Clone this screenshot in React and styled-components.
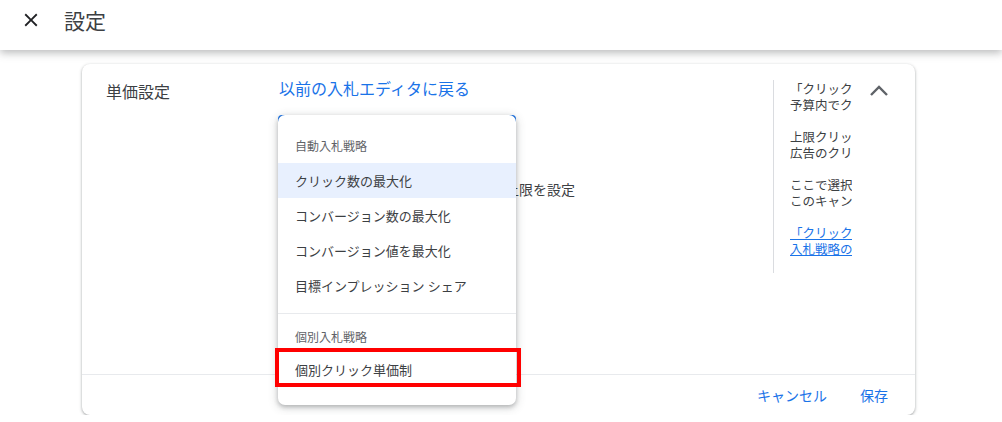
import React from 'react'
import styled, { createGlobalStyle } from 'styled-components'

const GlobalStyle = createGlobalStyle`
  body {
    margin: 0;
    background: #ffffff;
    font-family: Roboto, "Noto Sans CJK JP", sans-serif;
    color: #3c4043;
  }
`

const helpText = [
  ['「クリック数の最大化」は、', '予算内でクリック数が最大になるように'],
  ['上限クリック単価を設定すると、', '広告のクリック単価が制限されます'],
  ['ここで選択した入札戦略は、', 'このキャンペーンにのみ適用されます'],
]

const autoStrategies = [
  'クリック数の最大化',
  'コンバージョン数の最大化',
  'コンバージョン値を最大化',
  '目標インプレッション シェア',
]

export default function App() {
  return (
    <>
      <GlobalStyle />
      <Header>
        <CloseIcon viewBox="0 0 24 24">
          <path d="M19 6.41L17.59 5 12 10.59 6.41 5 5 6.41 10.59 12 5 17.59 6.41 19 12 13.41 17.59 19 19 17.59 13.41 12z" />
        </CloseIcon>
        <Title>設定</Title>
      </Header>
      <Main>
        <Card>
          <CardBody>
            <Label>単価設定</Label>
            <Content>
              <Link>以前の入札エディタに戻る</Link>
              <SelectBox />
              <OptionRow>
                <Checkbox />
                <span>自動入札で最大クリック単価の上限を設定</span>
              </OptionRow>
              <Dropdown>
                <GroupTitle>自動入札戦略</GroupTitle>
                {autoStrategies.map((s, i) => (
                  <Item key={s} $active={i === 0}>{s}</Item>
                ))}
                <Divider />
                <GroupTitle $small>個別入札戦略</GroupTitle>
                <Item $marked>個別クリック単価制</Item>
              </Dropdown>
            </Content>
            <Side>
              <HelpText>
                {helpText.map((p, i) => (
                  <Para key={i}>
                    {p.map((l) => (
                      <Line key={l}>{l}</Line>
                    ))}
                  </Para>
                ))}
                <Para>
                  <HelpLink>「クリック数の最大化」</HelpLink>
                  <HelpLink>入札戦略の詳細</HelpLink>
                </Para>
              </HelpText>
              <Chevron viewBox="0 0 24 24">
                <path d="M4 15l8-8 8 8" />
              </Chevron>
            </Side>
          </CardBody>
          <Footer>
            <TextButton>キャンセル</TextButton>
            <TextButton>保存</TextButton>
          </Footer>
        </Card>
      </Main>
    </>
  )
}

const Header = styled.header`
  height: 50px;
  padding: 0 0 10px 20px;
  box-sizing: border-box;
  display: flex;
  align-items: center;
  gap: 22px;
  background: #fff;
  box-shadow: 0 3px 8px rgba(60, 64, 67, 0.35);
  position: relative;
  z-index: 2;
`

const CloseIcon = styled.svg`
  width: 22px;
  height: 22px;
  fill: #202124;
`

const Title = styled.h1`
  margin: 0;
  font-size: 21px;
  font-weight: 400;
  color: #3c4043;
`

const Main = styled.main`
  padding: 14px 0 0 82px;
`

const Card = styled.section`
  width: 833px;
  background: #fff;
  border-radius: 8px;
  box-shadow: 0 1px 2px rgba(60, 64, 67, 0.3), 0 1px 3px 1px rgba(60, 64, 67, 0.15);
`

const CardBody = styled.div`
  height: 310px;
  box-sizing: border-box;
  padding: 16px 24px 0 24px;
  display: grid;
  grid-template-columns: 173px 1fr auto;
  align-items: start;
`

const Label = styled.div`
  font-size: 16px;
  line-height: 24px;
  color: #3c4043;
  padding-top: 1px;
`

const Content = styled.div`
  position: relative;
  display: flex;
  flex-direction: column;
  align-items: flex-start;
`

const Link = styled.a`
  font-size: 16px;
  line-height: 20px;
  color: #1a73e8;
  cursor: pointer;
`

const SelectBox = styled.div`
  margin: 15px 0 0 -1px;
  width: 234px;
  height: 40px;
  border: 2px solid #1a73e8;
  border-radius: 4px;
`

const OptionRow = styled.div`
  margin-top: 21px;
  display: flex;
  align-items: center;
  gap: 12px;
  font-size: 14px;
  line-height: 20px;
  color: #3c4043;
`

const Checkbox = styled.span`
  width: 14px;
  height: 14px;
  border: 2px solid #5f6368;
  border-radius: 2px;
`

const Dropdown = styled.div`
  position: absolute;
  left: -1px;
  top: 35px;
  width: 238px;
  height: 290px;
  box-sizing: border-box;
  background: #fff;
  border-radius: 7px;
  box-shadow: 0 2px 4px rgba(60, 64, 67, 0.3), 0 2px 8px 2px rgba(60, 64, 67, 0.15);
  z-index: 3;
`

const GroupTitle = styled.div`
  height: ${(p) => (p.$small ? '38px' : '48px')};
  box-sizing: border-box;
  padding: 0 0 ${(p) => (p.$small ? '6px' : '8px')} 17px;
  display: flex;
  align-items: flex-end;
  font-size: 12px;
  line-height: 16px;
  color: #5f6368;
`

const Item = styled.div`
  position: relative;
  height: 35px;
  padding-left: 17px;
  display: flex;
  align-items: center;
  font-size: 13px;
  color: #3c4043;
  background: ${(p) => (p.$active ? '#e8f0fe' : 'transparent')};

  ${(p) =>
    p.$marked &&
    `
    &::after {
      content: '';
      position: absolute;
      left: -3px;
      right: -5px;
      top: -4px;
      bottom: 0;
      border: 4px solid #ff0000;
    }
  `}
`

const Divider = styled.hr`
  margin: 10px 0 0;
  border: 0;
  border-top: 1px solid #e8eaed;
`

const Side = styled.aside`
  display: flex;
  align-items: flex-start;
  gap: 15px;
`

const HelpText = styled.div`
  width: 62px;
  height: 191px;
  padding-left: 16px;
  border-left: 1px solid #dadce0;
  overflow: hidden;
  display: flex;
  flex-direction: column;
  gap: 16px;
  padding-top: 2px;
  box-sizing: content-box;
`

const Para = styled.div`
  display: flex;
  flex-direction: column;
`

const Line = styled.span`
  font-size: 12.5px;
  line-height: 16px;
  white-space: nowrap;
  color: #3c4043;
`

const HelpLink = styled.a`
  font-size: 12.5px;
  line-height: 16px;
  white-space: nowrap;
  color: #1a73e8;
  text-decoration: underline;
`

const Chevron = styled.svg`
  width: 24px;
  height: 24px;
  fill: none;
  stroke: #5f6368;
  stroke-width: 2.4;
`

const Footer = styled.footer`
  height: 40px;
  border-top: 1px solid #e8eaed;
  display: flex;
  align-items: center;
  justify-content: flex-end;
  gap: 33px;
  padding-right: 27px;
`

const TextButton = styled.button`
  border: 0;
  background: none;
  padding: 0;
  font-family: inherit;
  font-size: 14px;
  color: #1a73e8;
  cursor: pointer;
`
